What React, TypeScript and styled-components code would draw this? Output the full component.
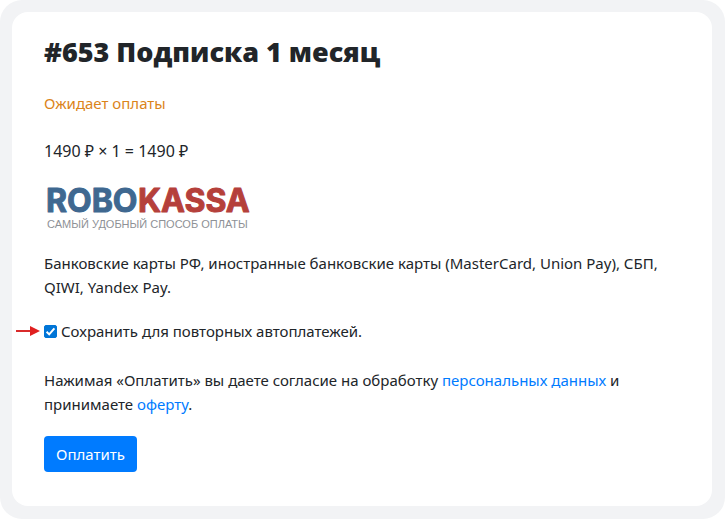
import React from "react";
import styled, { createGlobalStyle } from "styled-components";

const GlobalStyle = createGlobalStyle`
  *, *::before, *::after { box-sizing: border-box; }
  body {
    margin: 0;
    background: #fff;
    color: #212529;
    font: 400 15px/24px "Noto Sans", "Open Sans", sans-serif;
  }
`;

const Frame = styled.main`
  min-height: 100vh;
  display: flex;
  padding: 12px 13px 13px 12px;
  background: #f2f3f5;
  border-radius: 22px;
`;

const Card = styled.form`
  flex: 1;
  min-width: 0;
  padding: 24px 32px 32px;
  background: #fff;
  border-radius: 16px;
`;

const Title = styled.h1`
  margin: 0 0 23px;
  font: 800 27px/32px "Open Sans", "Noto Sans", sans-serif;
`;

const Paragraph = styled.p<{ $gap?: number }>`
  margin: 0 0 ${(p) => p.$gap ?? 24}px;
`;

const Status = styled(Paragraph)`
  color: #db841a;
`;

const Price = styled(Paragraph)`
  font-size: 16px;
`;

const Logo = styled.svg`
  display: block;
  width: 210px;
  height: 48px;
  margin-bottom: 16px;
  overflow: visible;
`;

const Wordmark = styled.text`
  fill: #3f6890;
  stroke: #3f6890;
  stroke-width: 1px;
  stroke-linejoin: round;
  font: 700 32px Inter, sans-serif;
`;

const WordmarkAccent = styled.tspan`
  fill: #b5403b;
  stroke: #b5403b;
`;

const Tagline = styled.text`
  fill: #8e9196;
  font: 400 11px "Liberation Sans", sans-serif;
`;

const CheckRow = styled.div`
  display: flex;
  align-items: center;
  gap: 4px;
  margin: 0 0 25px -28px;
`;

const Arrow = styled.svg`
  flex: none;
  width: 24px;
  height: 12px;
`;

const Checkbox = styled.input`
  flex: none;
  appearance: none;
  width: 13px;
  height: 13px;
  margin: 0;
  border: 1px solid #0075d7;
  border-radius: 2px;
  background: #fff;

  &:checked {
    background: #0075d7
      url("data:image/svg+xml,%3Csvg xmlns='http://www.w3.org/2000/svg' viewBox='0 0 11 11'%3E%3Cpath d='M1.6 5.8 4.2 8.4 9.4 2.4' fill='none' stroke='white' stroke-width='2'/%3E%3C/svg%3E")
      center / 11px 11px no-repeat;
  }
`;

const Link = styled.a`
  color: #007bff;
  text-decoration: none;

  &:hover { text-decoration: underline; }
`;

const PayButton = styled.button`
  height: 36px;
  padding: 0 12px;
  border: 0;
  border-radius: 4px;
  background: #007bff;
  color: #fff;
  font: inherit;
  cursor: pointer;
`;

export default function App() {
  return (
    <>
      <GlobalStyle />
      <Frame>
        <Card onSubmit={(e: React.FormEvent) => e.preventDefault()}>
          <Title>#653 Подписка 1 месяц</Title>
          <Status>Ожидает оплаты</Status>
          <Price>1490 ₽ × 1 = 1490 ₽</Price>
          <Logo viewBox="0 0 210 48">
            <Wordmark x="2" y="25">
              ROBO<WordmarkAccent x="94">KASSA</WordmarkAccent>
            </Wordmark>
            <Tagline x="3" y="41">САМЫЙ УДОБНЫЙ СПОСОБ ОПЛАТЫ</Tagline>
          </Logo>
          <Paragraph $gap={20}>
            Банковские карты РФ, иностранные банковские карты (MasterCard, Union Pay), СБП, QIWI, Yandex Pay.
          </Paragraph>
          <CheckRow>
            <Arrow viewBox="0 0 24 12" aria-hidden="true">
              <path d="M0 6H16" stroke="#d92b2b" strokeWidth="2" />
              <path d="M14 1 24 6 14 11Z" fill="#e02020" />
            </Arrow>
            <Checkbox id="save-card" type="checkbox" defaultChecked />
            <label htmlFor="save-card">Сохранить для повторных автоплатежей.</label>
          </CheckRow>
          <Paragraph $gap={20}>
            Нажимая «Оплатить» вы даете согласие на обработку <Link href="#privacy">персональных данных</Link> и
            принимаете <Link href="#offer">оферту</Link>.
          </Paragraph>
          <PayButton type="submit">Оплатить</PayButton>
        </Card>
      </Frame>
    </>
  );
}
